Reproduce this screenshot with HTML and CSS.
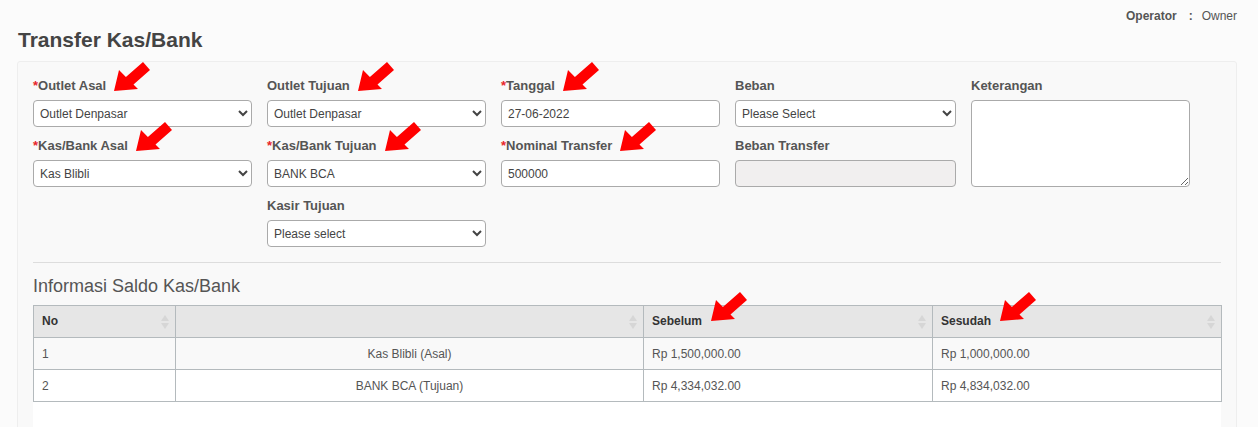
FILE: index.html
```html
<!DOCTYPE html>
<html>
<head>
<meta charset="utf-8">
<link rel="stylesheet" href="styles.css">
</head>
<body>
<div class="topbar">
  <span class="op-key">Operator</span>
  <span class="op-sep">:</span>
  <span class="op-val">Owner</span>
</div>
<h1 class="page-title">Transfer Kas/Bank</h1>
<div class="panel">
  <div class="form-grid">
    <div class="col">
      <div class="group">
        <label class="lbl"><span class="mark"><span class="req">*</span>Outlet Asal<span class="arrow"><svg width="38" height="31" viewBox="0 0 38 31"><polygon points="1,30 6,9 12.9,15.9 30,1 37,9 20.5,23.5 25,28" fill="#ff0000"/></svg></span></span></label>
        <select class="ctl"><option>Outlet Denpasar</option></select>
      </div>
      <div class="group">
        <label class="lbl"><span class="mark"><span class="req">*</span>Kas/Bank Asal<span class="arrow"><svg width="38" height="31" viewBox="0 0 38 31"><polygon points="1,30 6,9 12.9,15.9 30,1 37,9 20.5,23.5 25,28" fill="#ff0000"/></svg></span></span></label>
        <select class="ctl"><option>Kas Blibli</option></select>
      </div>
    </div>
    <div class="col">
      <div class="group">
        <label class="lbl"><span class="mark">Outlet Tujuan<span class="arrow"><svg width="38" height="31" viewBox="0 0 38 31"><polygon points="1,30 6,9 12.9,15.9 30,1 37,9 20.5,23.5 25,28" fill="#ff0000"/></svg></span></span></label>
        <select class="ctl"><option>Outlet Denpasar</option></select>
      </div>
      <div class="group">
        <label class="lbl"><span class="mark"><span class="req">*</span>Kas/Bank Tujuan<span class="arrow"><svg width="38" height="31" viewBox="0 0 38 31"><polygon points="1,30 6,9 12.9,15.9 30,1 37,9 20.5,23.5 25,28" fill="#ff0000"/></svg></span></span></label>
        <select class="ctl"><option>BANK BCA</option></select>
      </div>
      <div class="group">
        <label class="lbl"><span class="mark">Kasir Tujuan</span></label>
        <select class="ctl"><option>Please select</option></select>
      </div>
    </div>
    <div class="col">
      <div class="group">
        <label class="lbl"><span class="mark"><span class="req">*</span>Tanggal<span class="arrow"><svg width="38" height="31" viewBox="0 0 38 31"><polygon points="1,30 6,9 12.9,15.9 30,1 37,9 20.5,23.5 25,28" fill="#ff0000"/></svg></span></span></label>
        <input class="ctl txt" type="text" value="27-06-2022">
      </div>
      <div class="group">
        <label class="lbl"><span class="mark"><span class="req">*</span>Nominal Transfer<span class="arrow"><svg width="38" height="31" viewBox="0 0 38 31"><polygon points="1,30 6,9 12.9,15.9 30,1 37,9 20.5,23.5 25,28" fill="#ff0000"/></svg></span></span></label>
        <input class="ctl txt" type="text" value="500000">
      </div>
    </div>
    <div class="col col-wide">
      <div class="group">
        <label class="lbl"><span class="mark">Beban</span></label>
        <select class="ctl"><option>Please Select</option></select>
      </div>
      <div class="group">
        <label class="lbl"><span class="mark">Beban Transfer</span></label>
        <input class="ctl txt disabled" type="text" value="" disabled>
      </div>
    </div>
    <div class="col">
      <div class="group">
        <label class="lbl"><span class="mark">Keterangan</span></label>
        <textarea class="area"></textarea>
      </div>
    </div>
  </div>
  <hr class="divider">
  <h2 class="section-title">Informasi Saldo Kas/Bank</h2>
  <div class="table-wrap">
    <table class="saldo">
      <colgroup>
        <col class="c-no"><col class="c-name"><col class="c-amt"><col class="c-amt">
      </colgroup>
      <thead>
        <tr>
          <th><span class="mark">No</span><svg class="sort" width="8" height="16" viewBox="0 0 8 16"><polygon points="0,7 4,1 8,7" fill="#d6d6d6"/><polygon points="0,9 8,9 4,15" fill="#d6d6d6"/></svg></th>
          <th><svg class="sort" width="8" height="16" viewBox="0 0 8 16"><polygon points="0,7 4,1 8,7" fill="#d6d6d6"/><polygon points="0,9 8,9 4,15" fill="#d6d6d6"/></svg></th>
          <th><span class="mark">Sebelum<span class="arrow arrow-th"><svg width="38" height="31" viewBox="0 0 38 31"><polygon points="1,30 6,9 12.9,15.9 30,1 37,9 20.5,23.5 25,28" fill="#ff0000"/></svg></span></span><svg class="sort" width="8" height="16" viewBox="0 0 8 16"><polygon points="0,7 4,1 8,7" fill="#d6d6d6"/><polygon points="0,9 8,9 4,15" fill="#d6d6d6"/></svg></th>
          <th><span class="mark">Sesudah<span class="arrow arrow-th"><svg width="38" height="31" viewBox="0 0 38 31"><polygon points="1,30 6,9 12.9,15.9 30,1 37,9 20.5,23.5 25,28" fill="#ff0000"/></svg></span></span><svg class="sort" width="8" height="16" viewBox="0 0 8 16"><polygon points="0,7 4,1 8,7" fill="#d6d6d6"/><polygon points="0,9 8,9 4,15" fill="#d6d6d6"/></svg></th>
        </tr>
      </thead>
      <tbody>
        <tr class="odd">
          <td>1</td>
          <td class="center">Kas Blibli (Asal)</td>
          <td>Rp 1,500,000.00</td>
          <td>Rp 1,000,000.00</td>
        </tr>
        <tr>
          <td>2</td>
          <td class="center">BANK BCA (Tujuan)</td>
          <td>Rp 4,334,032.00</td>
          <td>Rp 4,834,032.00</td>
        </tr>
      </tbody>
    </table>
    <div class="table-foot"></div>
  </div>
</div>
</body>
</html>
```
FILE: styles.css
```css
html, body {
  margin: 0;
  padding: 0;
  background: #fbfbfb;
}
body {
  padding: 0 21px 0 17px;
  font-family: "Liberation Sans", Arial, sans-serif;
  color: #555;
  font-size: 12px;
}
.topbar {
  display: flex;
  justify-content: flex-end;
  align-items: center;
  height: 16px;
  padding-top: 8px;
  line-height: 16px;
  font-size: 12px;
  color: #555;
}
.op-key { font-weight: bold; }
.op-sep { font-weight: bold; margin: 0 9px 0 12px; }
.op-val { font-weight: normal; }

.page-title {
  margin: 4px 0 0 1px;
  font-size: 21px;
  line-height: 24px;
  font-weight: bold;
  color: #444;
  height: 33px;
}
.panel {
  background: #f9f9f9;
  border: 1px solid #eeeeee;
  border-radius: 3px;
  padding: 16px 15px 0 15px;
}
.form-grid {
  display: flex;
  gap: 15px;
  align-items: flex-start;
}
.col {
  width: 219px;
  display: flex;
  flex-direction: column;
  gap: 11px;
}
.col-wide { width: 221px; }
.group {
  display: flex;
  flex-direction: column;
  gap: 7px;
}
.lbl {
  display: block;
  font-size: 13px;
  line-height: 15px;
  font-weight: bold;
  color: #555;
  height: 15px;
}
.mark {
  position: relative;
  display: inline-block;
}
.req { color: #e8262a; }
.arrow {
  position: absolute;
  left: calc(100% + 7px);
  top: -17px;
  width: 38px;
  height: 31px;
  line-height: 0;
  pointer-events: none;
}
.arrow svg { display: block; }
.arrow-th {
  left: calc(100% + 8px);
  top: -23px;
}
.ctl {
  box-sizing: border-box;
  width: 100%;
  height: 27px;
  margin: 0;
  border: 1px solid #aaaaaa;
  border-radius: 4px;
  background-color: #fff;
  font-family: "Liberation Sans", Arial, sans-serif;
  font-size: 12px;
  color: #444;
  padding: 0 2px;
}
.txt {
  padding: 0 6px;
}
.disabled {
  background-color: #f1efef;
}
.area {
  box-sizing: border-box;
  width: 219px;
  height: 87px;
  margin: 0;
  border: 1px solid #aaaaaa;
  border-radius: 4px;
  background: #fff;
  font-family: "Liberation Sans", Arial, sans-serif;
  font-size: 12px;
  display: block;
}
.divider {
  margin: 15px 0 0 0;
  border: 0;
  border-top: 1px solid #dddddd;
  height: 0;
}
.section-title {
  margin: 0;
  padding-top: 12px;
  font-size: 18px;
  line-height: 22px;
  font-weight: normal;
  color: #555;
  height: 30px;
}
.table-wrap {
  background: #fff;
}
.saldo {
  width: 100%;
  border-collapse: collapse;
  table-layout: fixed;
  font-size: 12px;
}
.c-no { width: 142px; }
.c-name { width: 468px; }
.c-amt { width: 289px; }
.saldo th, .saldo td {
  border: 1px solid #b4babd;
  height: 32px;
  padding: 0 8px;
  box-sizing: border-box;
  text-align: left;
  vertical-align: middle;
}
.saldo th {
  background: #e6e6e6;
  font-weight: bold;
  color: #333;
  position: relative;
  line-height: 15px;
}
.saldo td {
  color: #555;
}
.saldo tr.odd td { background: #f9f9f9; }
.saldo td.center { text-align: center; }
.sort {
  position: absolute;
  right: 6px;
  top: 8px;
}
.table-foot {
  height: 40px;
}
```
